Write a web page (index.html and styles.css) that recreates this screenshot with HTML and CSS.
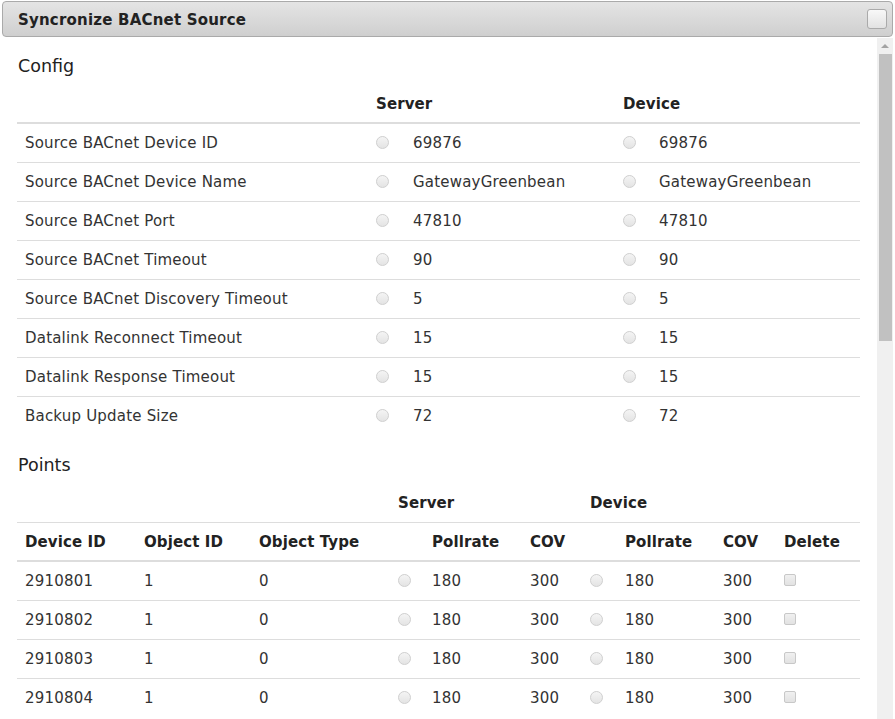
FILE: index.html
```html
<!DOCTYPE html>
<html>
<head>
<meta charset="utf-8">
<link rel="stylesheet" href="styles.css">
</head>
<body>
<div class="dialog">
  <div class="titlebar">
    <span class="title">Syncronize BACnet Source</span>
    <span class="close"></span>
  </div>
  <div class="body">
    <div class="content">
      <h4 class="section">Config</h4>
      <table class="grid">
        <colgroup>
          <col style="width:351px"><col style="width:37px"><col style="width:210px"><col style="width:36px"><col style="width:209px">
        </colgroup>
        <thead>
          <tr><th></th><th colspan="2">Server</th><th colspan="2">Device</th></tr>
        </thead>
        <tbody>
          <tr><td>Source BACnet Device ID</td><td><span class="radio"></span></td><td>69876</td><td><span class="radio"></span></td><td>69876</td></tr>
          <tr><td>Source BACnet Device Name</td><td><span class="radio"></span></td><td>GatewayGreenbean</td><td><span class="radio"></span></td><td>GatewayGreenbean</td></tr>
          <tr><td>Source BACnet Port</td><td><span class="radio"></span></td><td>47810</td><td><span class="radio"></span></td><td>47810</td></tr>
          <tr><td>Source BACnet Timeout</td><td><span class="radio"></span></td><td>90</td><td><span class="radio"></span></td><td>90</td></tr>
          <tr><td>Source BACnet Discovery Timeout</td><td><span class="radio"></span></td><td>5</td><td><span class="radio"></span></td><td>5</td></tr>
          <tr><td>Datalink Reconnect Timeout</td><td><span class="radio"></span></td><td>15</td><td><span class="radio"></span></td><td>15</td></tr>
          <tr><td>Datalink Response Timeout</td><td><span class="radio"></span></td><td>15</td><td><span class="radio"></span></td><td>15</td></tr>
          <tr><td>Backup Update Size</td><td><span class="radio"></span></td><td>72</td><td><span class="radio"></span></td><td>72</td></tr>
        </tbody>
      </table>

      <h4 class="section points">Points</h4>
      <table class="grid">
        <colgroup>
          <col style="width:119px"><col style="width:115px"><col style="width:139px"><col style="width:34px"><col style="width:98px"><col style="width:60px"><col style="width:35px"><col style="width:98px"><col style="width:61px"><col style="width:84px">
        </colgroup>
        <thead>
          <tr class="group"><th colspan="3"></th><th colspan="3">Server</th><th colspan="3">Device</th><th></th></tr>
          <tr class="cols"><th>Device ID</th><th>Object ID</th><th>Object Type</th><th></th><th>Pollrate</th><th>COV</th><th></th><th>Pollrate</th><th>COV</th><th>Delete</th></tr>
        </thead>
        <tbody>
          <tr><td>2910801</td><td>1</td><td>0</td><td><span class="radio"></span></td><td>180</td><td>300</td><td><span class="radio"></span></td><td>180</td><td>300</td><td><span class="check"></span></td></tr>
          <tr><td>2910802</td><td>1</td><td>0</td><td><span class="radio"></span></td><td>180</td><td>300</td><td><span class="radio"></span></td><td>180</td><td>300</td><td><span class="check"></span></td></tr>
          <tr><td>2910803</td><td>1</td><td>0</td><td><span class="radio"></span></td><td>180</td><td>300</td><td><span class="radio"></span></td><td>180</td><td>300</td><td><span class="check"></span></td></tr>
          <tr><td>2910804</td><td>1</td><td>0</td><td><span class="radio"></span></td><td>180</td><td>300</td><td><span class="radio"></span></td><td>180</td><td>300</td><td><span class="check"></span></td></tr>
        </tbody>
      </table>
    </div>
    <div class="scrollbar">
      <div class="arrow"></div>
      <div class="thumb"></div>
    </div>
  </div>
</div>
</body>
</html>
```

FILE: styles.css
```css
html, body {
  margin: 0;
  padding: 0;
  background: #fff;
  height: 100%;
  overflow: hidden;
}
body {
  font-family: "DejaVu Sans", Verdana, sans-serif;
  color: #333;
  font-size: 15px;
}
.dialog {
  padding: 1px 2px 0 2px;
  height: 718px;
  display: flex;
  flex-direction: column;
}
.titlebar {
  height: 34px;
  border: 1px solid #aaa;
  border-radius: 4px;
  background: linear-gradient(#e4e4e4, #cfcfcf);
  display: flex;
  align-items: center;
  justify-content: space-between;
  padding: 0 5px 0 15px;
  flex: none;
}
.title {
  font-weight: bold;
  font-size: 15px;
  letter-spacing: 0.2px;
  color: #222;
  margin-top: 1px;
}
.close {
  width: 18px;
  height: 18px;
  border: 1px solid #aaa;
  border-radius: 3px;
  background: linear-gradient(#f8f8f8, #e2e2e2);
}
.body {
  flex: 1;
  display: flex;
  overflow: hidden;
}
.content {
  flex: 1;
  padding: 0 17px 0 15px;
  overflow: hidden;
}
.section {
  font-size: 17.5px;
  font-weight: normal;
  color: #222;
  line-height: 20px;
  margin: 19px 0 9px 1px;
}
.section.points {
  margin-top: 20px;
  margin-bottom: 9px;
}
.grid {
  width: 843px;
  table-layout: fixed;
  border-collapse: collapse;
  margin-bottom: 20px;
}
.grid th, .grid td {
  padding: 8px;
  line-height: 22px;
  text-align: left;
  white-space: nowrap;
  vertical-align: middle;
  letter-spacing: 0.2px;
}
.grid th {
  font-weight: bold;
  color: #222;
  letter-spacing: 0.1px;
  padding-bottom: 7px;
  border-bottom: 2px solid #ddd;
}
.grid td {
  border-top: 1px solid #ddd;
}
.grid tbody tr:first-child td {
  border-top: none;
}
.grid tr.group th {
  padding-bottom: 8px;
  border-bottom-width: 1px;
}
.radio {
  display: inline-block;
  width: 11px;
  height: 11px;
  border: 1px solid #d0d0d0;
  border-radius: 50%;
  background: linear-gradient(#f4f4f4, #e4e4e4);
  vertical-align: -1px;
}
.check {
  display: inline-block;
  width: 10px;
  height: 10px;
  border: 1px solid #c8c8c8;
  border-radius: 2px;
  background: linear-gradient(#f0f0f0, #e2e2e2);
  vertical-align: 0;
}
.scrollbar {
  width: 16px;
  margin-top: 1px;
  background: #f0f0f0;
  flex: none;
  display: flex;
  flex-direction: column;
  align-items: center;
}
.arrow {
  margin-top: 6px;
  width: 0;
  height: 0;
  border-left: 4px solid transparent;
  border-right: 4px solid transparent;
  border-bottom: 4px solid #a3a3a3;
}
.thumb {
  margin-top: 6px;
  width: 13px;
  height: 287px;
  background: #c1c1c1;
}
```
